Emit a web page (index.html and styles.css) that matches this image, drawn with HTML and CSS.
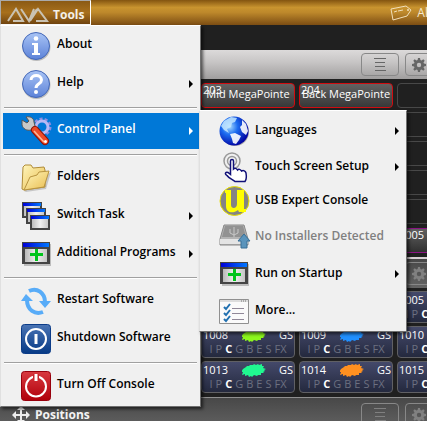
FILE: index.html
```html
<!DOCTYPE html>
<html lang="en">
<head>
<meta charset="utf-8">
<title>AVA Tools</title>
<link rel="stylesheet" href="styles.css">
</head>
<body>
<svg class="defs" aria-hidden="true">
  <defs>
    <linearGradient id="orb" x2="0" y2="1"><stop stop-color="#a9c4f5"/><stop offset="1" stop-color="#5c82d8"/></linearGradient>
    <linearGradient id="barBlue"><stop stop-color="#0000d8"/><stop offset="1" stop-color="#0078ff"/></linearGradient>
    <linearGradient id="pane"><stop stop-color="#b8b8b8"/><stop offset=".5" stop-color="#f0f0f0"/><stop offset="1" stop-color="#c4c4c4"/></linearGradient>
    <linearGradient id="folder" x2="1" y2="1"><stop stop-color="#fff6bd"/><stop offset="1" stop-color="#e9bd4f"/></linearGradient>
    <linearGradient id="blueTile" x2="0" y2="1"><stop stop-color="#4a74b4"/><stop offset="1" stop-color="#063a86"/></linearGradient>
    <linearGradient id="redTile" x2="0" y2="1"><stop stop-color="#d83a40"/><stop offset="1" stop-color="#b0000a"/></linearGradient>
    <radialGradient id="sea" cx=".35" cy=".35" r=".7"><stop stop-color="#a8dcff"/><stop offset=".4" stop-color="#1c6cf0"/><stop offset="1" stop-color="#0000a0"/></radialGradient>
    <symbol id="gear" viewBox="0 0 14 14">
      <path fill="currentColor" fill-rule="evenodd" d="M6 0h2l.4 2 1.2.5L11.300 1.300l1.400 1.400-1.200 1.700.5 1.200 2 .4v2l-2 .4-.5 1.200 1.200 1.700-1.400 1.400-1.700-1.200-1.200.5L8 14H6l-.4-2-1.200-.5-1.700 1.200-1.400-1.400 1.200-1.700L2 8.400 0 8V6l2-.4.5-1.200-1.200-1.700 1.400-1.400 1.700 1.200L5.600 2zM7 4.800a2.200 2.200 0 1 0 0 4.400 2.200 2.200 0 0 0 0-4.400z"/>
    </symbol>
    <symbol id="list" viewBox="0 0 14 14"><path stroke="currentColor" stroke-width="1" d="M1 .5h12M2 4.500h10M2 8.500h10M2 12.500h11"/></symbol>
    <symbol id="program" viewBox="0 0 30 30">
      <path fill="#999" d="M3 5h27v22H3z" opacity=".6"/>
      <path fill="#444" d="M1 3h28v22H1z"/><path fill="url(#barBlue)" d="M2 4h26v4H2z"/>
      <path fill="url(#pane)" d="M4 10h22v13H4z"/>
      <path fill="#00c41c" d="M14 10h3v4h5v3h-5v5h-3v-5H9v-3h5z"/>
    </symbol>
    <symbol id="splat" viewBox="0 0 24 14">
      <path fill="currentColor" d="M1 6l3-2 1-1 2 0 1-1 3 0 1-1 2 1 2-1 1 1 3-1 0 2 2 0-1 2 3 1-2 1 1 1-2 1 1 1-3 0 0 2-3 0-1 1-3-1-2 2-1-1-2 1-1-2-3 1 0-2-3 1 1-3-2 0z"/>
    </symbol>
  </defs>
</svg>
<div class="app">
  <header class="titlebar">
    <button class="tools" type="button">
      <svg class="logo" viewBox="0 0 42 16" aria-hidden="true"><path d="M1 14L9 2l7 12H6M14 2l8 12 5-12M22 14l8-12M23 14l8-12 9 12H29" fill="none" stroke="#c9c2b2" stroke-width="2"/></svg>
      <span>Tools</span>
    </button>
    <div class="legend">
      <svg class="tag" viewBox="0 0 22 16" aria-hidden="true"><path d="M1 4l15-3 5 4-4 6-14 4zM4 7l3-1M8 6l5-1" fill="none" stroke="#f1dfb9"/><circle cx="18" cy="5" r="1" fill="#f1dfb9"/></svg>
      <span>All</span>
    </div>
  </header>
  <main class="workspace">
    <section>
      <div class="panel-head panel-head--light">
        <button class="tool tool--wide" type="button" aria-label="List"><svg class="glyph"><use href="#list"/></svg></button>
        <button class="tool" type="button" aria-label="Settings"><svg class="glyph"><use href="#gear"/></svg></button>
      </div>
      <div class="grid grid--groups">
        <div class="cell"></div><div class="cell"></div>
        <div class="cell cell--red"><span class="num">203</span>Mid MegaPointe</div>
        <div class="cell cell--red"><span class="num">204</span>Back MegaPointe</div>
        <div class="cell"></div>
        <div class="cell"></div><div class="cell"></div><div class="cell"></div><div class="cell"></div><div class="cell"></div>
        <div class="cell"></div><div class="cell"></div><div class="cell"></div><div class="cell"></div><div class="cell"></div>
        <div class="cell"></div><div class="cell"></div><div class="cell"></div><div class="cell"></div><div class="cell"></div>
        <div class="cell"></div><div class="cell"></div><div class="cell"></div><div class="cell"></div><div class="cell"></div>
        <div class="cell"></div><div class="cell"></div><div class="cell"></div><div class="cell"></div>
        <div class="cell cell--purple"><span class="num">1005</span></div>
      </div>
    </section>
    <section>
      <div class="panel-head panel-head--line">
        <button class="tool tool--wide" type="button" aria-label="List"><svg class="glyph"><use href="#list"/></svg></button>
        <button class="tool" type="button" aria-label="Settings"><svg class="glyph"><use href="#gear"/></svg></button>
      </div>
      <div class="grid grid--palettes">
        <div class="pal"></div><div class="pal"></div><div class="pal"></div><div class="pal"></div>
        <div class="pal"><div class="top"><span>1005</span><span>GS</span></div><div class="attrs"><i>I</i><i>P</i><b>C</b><i>G</i><i>B</i><i>E</i><i>S</i><i>FX</i></div></div>
        <div class="pal"></div><div class="pal"></div>
        <div class="pal"><div class="top"><span>1008</span><svg class="splat lime"><use href="#splat"/></svg><span>GS</span></div><div class="attrs"><i>I</i><i>P</i><b>C</b><i>G</i><i>B</i><i>E</i><i>S</i><i>FX</i></div></div>
        <div class="pal"><div class="top"><span>1009</span><svg class="splat blue"><use href="#splat"/></svg><span>GS</span></div><div class="attrs"><i>I</i><i>P</i><b>C</b><i>G</i><i>B</i><i>E</i><i>S</i><i>FX</i></div></div>
        <div class="pal"><div class="top"><span>1010</span><span>GS</span></div><div class="attrs"><i>I</i><i>P</i><b>C</b><i>G</i><i>B</i><i>E</i><i>S</i><i>FX</i></div></div>
        <div class="pal"></div><div class="pal"></div>
        <div class="pal"><div class="top"><span>1013</span><svg class="splat green"><use href="#splat"/></svg><span>GS</span></div><div class="attrs"><i>I</i><i>P</i><b>C</b><i>G</i><i>B</i><i>E</i><i>S</i><i>FX</i></div></div>
        <div class="pal"><div class="top"><span>1014</span><svg class="splat orange"><use href="#splat"/></svg><span>GS</span></div><div class="attrs"><i>I</i><i>P</i><b>C</b><i>G</i><i>B</i><i>E</i><i>S</i><i>FX</i></div></div>
        <div class="pal"><div class="top"><span>1015</span><span>GS</span></div><div class="attrs"><i>I</i><i>P</i><b>C</b><i>G</i><i>B</i><i>E</i><i>S</i><i>FX</i></div></div>
      </div>
    </section>
    <section>
      <div class="panel-head panel-head--last">
        <h2 class="panel-title"><svg class="move" viewBox="0 0 18 18" aria-hidden="true"><path fill="#eee" d="M9 0l4 4h-3v4h4V5l4 4-4 4v-3h-4v4h3l-4 4-4-4h3v-4H4v3L0 9l4-4v3h4V4H5z"/></svg>Positions</h2>
        <button class="tool tool--wide" type="button" aria-label="List"><svg class="glyph"><use href="#list"/></svg></button>
        <button class="tool" type="button" aria-label="Settings"><svg class="glyph"><use href="#gear"/></svg></button>
      </div>
    </section>
  </main>

  <nav class="menu menu--main" aria-label="Tools">
    <button class="item" type="button">
      <svg class="icon" viewBox="0 0 30 30"><circle cx="15.500" cy="16" r="14" fill="#bbb"/><circle cx="15" cy="15" r="13.500" fill="url(#orb)" stroke="#4468b8"/><circle cx="15" cy="7.500" r="2.300" fill="#fff"/><path fill="#fff" d="M11 12h6v10h2v2h-8v-2h2v-8h-2z"/></svg>
      <span class="label">About</span></button>
    <button class="item" type="button">
      <svg class="icon" viewBox="0 0 30 30"><circle cx="15.500" cy="16" r="14" fill="#bbb"/><circle cx="15" cy="15" r="13.500" fill="url(#orb)" stroke="#4468b8"/><path fill="none" stroke="#fff" stroke-width="3" d="M10 11c0-6 10.500-6 10.500 0 0 4-5.500 3.500-5.500 8"/><circle cx="15" cy="23" r="2" fill="#fff"/></svg>
      <span class="label">Help</span><span class="arrow"></span></button>
    <hr class="sep">
    <button class="item item--active" type="button">
      <svg class="icon" viewBox="0 0 30 30"><circle cx="21" cy="11" r="8" fill="none" stroke="#8c8ce0" stroke-width="3" stroke-dasharray="3 2"/><circle cx="21" cy="11" r="6" fill="none" stroke="#b8b8f4" stroke-width="3"/><path fill="#c8c8c8" stroke="#555" d="M1 4l5 3 2-2-3-4c4-1 8 1 8 5l1 4-4 4c-4 1-8-1-9-5z"/><path stroke="#8c1408" stroke-width="8" stroke-linecap="round" d="M14 14l10 11"/><path stroke="#f04a28" stroke-width="6" stroke-linecap="round" d="M14 14l10 11"/><path stroke="#ffb898" stroke-width="1.500" d="M13 15l10 11"/><circle cx="24.500" cy="25.500" r="1.500" fill="#fff"/></svg>
      <span class="label">Control Panel</span><span class="arrow"></span></button>
    <hr class="sep">
    <button class="item" type="button">
      <svg class="icon" viewBox="0 0 30 30"><path fill="#aaa" d="M3 28l2 1 20-3 5-17z" opacity=".6"/><path fill="url(#folder)" stroke="#b08c38" d="M1 26L2 4l2-2h6l2 3 11-1 1 3v17L3 27z"/><path fill="url(#folder)" stroke="#b89440" d="M3 27l6-13 7-2 2-3 10-1-5 16z"/></svg>
      <span class="label">Folders</span></button>
    <button class="item" type="button">
      <svg class="icon" viewBox="0 0 30 30"><g stroke="#444" stroke-width="2" fill="url(#pane)"><path d="M2 2h18v14H2z"/><path d="M6 8h18v14H6z"/><path d="M10 15h18v13H10z"/></g><path fill="url(#barBlue)" d="M2 2h18v3H2z"/><path fill="url(#barBlue)" d="M6 8h18v3H6z"/><path fill="url(#barBlue)" d="M10 15h18v3H10z"/></svg>
      <span class="label">Switch Task</span><span class="arrow"></span></button>
    <button class="item" type="button">
      <svg class="icon"><use href="#program"/></svg>
      <span class="label">Additional Programs</span><span class="arrow"></span></button>
    <hr class="sep">
    <button class="item" type="button">
      <svg class="icon" viewBox="0 0 30 30"><path fill="none" stroke="#58acf8" stroke-width="4" d="M8 5c8-4 16 2 16 11M22 26C14 29 6 24 6 14"/><path fill="#58acf8" d="M18 15h12l-6 7zM0 15h12L5 8z"/></svg>
      <span class="label">Restart Software</span></button>
    <button class="item" type="button">
      <svg class="icon" viewBox="0 0 30 30"><rect x="0.500" y="0.500" width="29" height="29" rx="3" fill="url(#blueTile)" stroke="#0c3c88"/><circle cx="15" cy="15" r="10" fill="none" stroke="#fff" stroke-width="2"/><path stroke="#fff" stroke-width="3" d="M15 10v10"/></svg>
      <span class="label">Shutdown Software</span></button>
    <hr class="sep">
    <button class="item" type="button">
      <svg class="icon" viewBox="0 0 30 30"><rect x="0.500" y="0.500" width="29" height="29" rx="3" fill="url(#redTile)" stroke="#98000c"/><circle cx="15" cy="15.500" r="10" fill="none" stroke="#fff" stroke-width="2"/><path stroke="#c8242c" stroke-width="6" d="M15 3v6"/><path stroke="#fff" stroke-width="3" d="M15 3v7"/></svg>
      <span class="label">Turn Off Console</span></button>
  </nav>

  <nav class="menu menu--sub" aria-label="Control Panel">
    <button class="item" type="button">
      <svg class="icon" viewBox="0 0 30 30"><circle cx="16" cy="16" r="14" fill="#aaa"/><circle cx="15" cy="15" r="14.500" fill="url(#sea)"/><path fill="#c4e8ff" d="M5 5l7-4 6 1-2 4-3 1-1 4-4 2 2 4-5-3-3-4z" opacity=".85"/><path fill="#fff" d="M11 18l5-1 6 3-2 4-3 4-3-1-1-4zM23 4l4 4 2 7-2 4-4-3-2-5 2-2z" opacity=".9"/></svg>
      <span class="label">Languages</span><span class="arrow"></span></button>
    <button class="item item--compact" type="button">
      <svg class="icon" viewBox="0 0 30 30"><g fill="none" stroke="#999" stroke-width="1.500"><circle cx="13" cy="9" r="8"/><circle cx="13" cy="9" r="4.500"/></g><path fill="#fff" stroke="#101078" stroke-width="1.500" d="M11.500 9c0-2 3-2 3 0v8c1-1 3-1 4 1 1-1 3-1 4 1 2-1 4 0 4.500 2 .5 3 1 6-1 8.500H16c-2-2-6-3-8-6-3-2-1-4 1-3l2.500 2z"/></svg>
      <span class="label">Touch Screen Setup</span><span class="arrow"></span></button>
    <button class="item item--compact" type="button">
      <svg class="icon" viewBox="0 0 30 30"><circle cx="15.500" cy="15" r="14.500" fill="#848484" stroke="#e8e000" stroke-width="1"/><path fill="#ff0" d="M6 4h6v15c0 4 6 4 6-1V4h7v19h2v3h-7l-1-2c-5 4-12 3-12-4V7H6z"/></svg>
      <span class="label">USB Expert Console</span></button>
    <button class="item" type="button" disabled>
      <svg class="icon" viewBox="0 0 30 30"><path fill="#b4b4b4" stroke="#888" d="M5 3h20l4 14v6H1v-6z"/><path fill="#e4e4e4" d="M1 17h28v5H1z"/><path fill="#929292" d="M6 4h18l3 11H3z"/><path fill="none" stroke="#c8c8c8" d="M15 5v10M11 7v4l4 2 4-2V7"/><path fill="#5a94bc" stroke="#386f96" d="M25 12l6 7h-3v7h-6v-7h-3z"/></svg>
      <span class="label">No Installers Detected</span></button>
    <button class="item item--mid" type="button">
      <svg class="icon"><use href="#program"/></svg>
      <span class="label">Run on Startup</span><span class="arrow"></span></button>
    <button class="item" type="button">
      <svg class="icon" viewBox="0 0 30 30"><path fill="#fafafa" stroke="#909090" d="M.5 3.500h29v24H.5z"/><path fill="#ddd" d="M1 4h28v2H1z"/><path stroke="#777" d="M22 5h1M24 5h1M26 5h1"/><path fill="none" stroke="#2070b0" stroke-width="2" d="M5 11l2 2 4-5M5 17l2 2 4-5M5 23l2 2 4-5"/><path stroke="#908898" d="M13 12.500h12M13 17.500h12M13 23.500h12"/></svg>
      <span class="label">More...</span></button>
  </nav>
</div>
</body>
</html>
```
FILE: styles.css
```css
* { box-sizing: border-box; }

body {
  margin: 0;
  overflow: hidden;
  background: #202020;
  font: 12px/16px "Segoe UI", "Open Sans", "Noto Sans", sans-serif;
}

button { font: inherit; }

.defs { position: absolute; width: 0; height: 0; }

.app {
  position: relative;
  height: 100vh;
  overflow: hidden;
}

.titlebar {
  display: flex;
  justify-content: space-between;
  height: 25px;
  background: linear-gradient(#835410, #c9942f 30%, #bd882b 50%, #7c4d13);
  color: #f4e8d0;
}

.tools {
  display: flex;
  align-items: center;
  gap: 4px;
  padding: 4px 6px 0 6px;
  border: 1px solid #fff;
  border-color: #aaa #fff #fff #aaa;
  background: linear-gradient(#8b5a14, #a8701c 50%, #704410);
  color: #f4f0e8;
  font-weight: 700;
}

.logo { width: 42px; height: 16px; }

.legend {
  display: flex;
  align-items: center;
  gap: 5px;
  margin-right: -4px;
  font-size: 12px;
}

.tag { width: 22px; height: 16px; }

.workspace { padding-top: 25px; }

.panel-head {
  display: flex;
  justify-content: flex-end;
  align-items: center;
  gap: 6px;
  height: 29px;
  padding-left: 12px;
  background: linear-gradient(#484848, #646464);
  color: #808080;
}

.panel-head--light {
  background: linear-gradient(#dcdada, #c8c6c6 40%, #a09e9e);
  color: #666;
}

.panel-head--line {
  height: 31px;
  border-top: 2px solid #d8d0d4;
}

.panel-head--last {
  height: 34px;
  border-top: 1px solid #909090;
}

.panel-title {
  display: flex;
  align-items: center;
  gap: 5px;
  margin: 0 auto 0 0;
  color: #f4f4f4;
  font-size: 12px;
  font-weight: 700;
}

.move { width: 18px; height: 18px; }

.tool {
  display: flex;
  flex: none;
  align-items: center;
  justify-content: center;
  width: 28px;
  height: 23px;
  margin-right: -6px;
  padding: 0;
  border: 1px solid #888;
  border-radius: 4px;
  background: transparent;
  color: inherit;
}

.tool--wide { width: 38px; margin-right: 0; }

.glyph { width: 14px; height: 14px; }

.grid {
  display: grid;
  grid-template-columns: repeat(5, 94px);
  column-gap: 4px;
  padding: 4px 5px;
  background: #202020;
}

.grid--groups { grid-auto-rows: 25px; row-gap: 4px; }

.grid--palettes { grid-auto-rows: 32px; row-gap: 3px; padding-top: 3px; }

.cell {
  position: relative;
  display: flex;
  align-items: center;
  justify-content: center;
  padding-bottom: 4px;
  border: 1px solid #484848;
  border-radius: 4px;
  color: #fff;
  font-size: 11px;
  white-space: nowrap;
}

.cell--red { border-color: #d00c10; background: linear-gradient(#626262, #383838); }

.cell--purple { border-color: #8c1484; background: linear-gradient(#606060, #303030); }

.num {
  position: absolute;
  top: -2px;
  left: 1px;
}

.pal {
  padding: 0 1px;
  border: 1px solid #606064;
  border-radius: 4px;
  background: linear-gradient(#44496a, #24293e);
  color: #fff;
  font-size: 11px;
}

.top {
  display: flex;
  justify-content: space-between;
  align-items: center;
  height: 15px;
}

.splat { width: 24px; height: 14px; }

.lime { color: #8cf81c; }
.blue { color: #2090ff; }
.green { color: #20f890; }
.orange { color: #ff9020; }

.attrs {
  display: flex;
  justify-content: center;
  gap: 3px;
  line-height: 14px;
}

.attrs i { color: #6c7080; font-style: normal; }

.menu {
  position: absolute;
  display: flex;
  flex-direction: column;
  border: 1px solid #707070;
  border-top-color: #fff;
  border-left-color: #e0e0e0;
  background: #f0f0f0;
  box-shadow: 2px 2px 3px rgb(0 0 0 / 60%);
}

.menu--main { top: 25px; left: 0; width: 201px; padding: 1px 1px 1px 2px; }

.menu--sub { top: 110px; left: 199px; width: 208px; padding: 1px; }

.item {
  display: flex;
  align-items: center;
  gap: 6px;
  height: 38px;
  padding: 0 6px 0 18px;
  border: 0;
  background: transparent;
  color: #000;
  font-weight: 600;
  text-align: left;
  white-space: nowrap;
}

.item:disabled { color: #808080; }

.item--active {
  height: 36px;
  margin: 1px 0;
  background: #0078d7;
  color: #fff;
}

.item--compact { height: 34px; }

.item--mid { height: 36px; }

.icon { flex: none; width: 30px; height: 30px; overflow: visible; }

.label { flex: 1; padding-bottom: 4px; }

.menu--sub .label { padding: 0 0 2px; }

.arrow {
  border: 4px solid transparent;
  border-right: 0;
  border-left-color: currentColor;
}

.sep {
  height: 9px;
  margin: 0 2px 0 1px;
  padding: 4px 0 3px;
  border: 0;
  background: linear-gradient(#a0a0a0 50%, #fff 50%) content-box;
}
```
